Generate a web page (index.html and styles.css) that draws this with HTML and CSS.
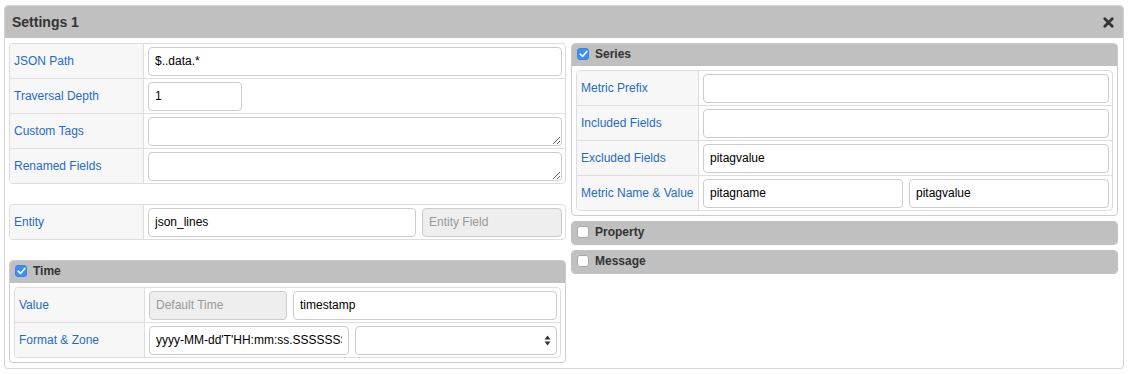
FILE: index.html
```html
<!DOCTYPE html>
<html>
<head>
<meta charset="utf-8">
<link rel="stylesheet" href="styles.css">
</head>
<body>
<div class="panel">
  <div class="panel-head">
    <span class="title">Settings 1</span>
    <svg class="close" width="11" height="11" viewBox="0 0 11 11"><path d="M1.8 1.8 L9.2 9.2 M9.2 1.8 L1.8 9.2" stroke="#333" stroke-width="2.8" stroke-linecap="round"/></svg>
  </div>
  <div class="panel-body">
    <div class="col">
      <div class="ftable wide">
        <div class="frow"><div class="flabel">JSON Path</div><div class="fcell"><input class="inp" value="$..data.*"></div></div>
        <div class="frow"><div class="flabel">Traversal Depth</div><div class="fcell"><input class="inp short" value="1"></div></div>
        <div class="frow"><div class="flabel">Custom Tags</div><div class="fcell"><textarea class="inp ta"></textarea></div></div>
        <div class="frow"><div class="flabel">Renamed Fields</div><div class="fcell"><textarea class="inp ta"></textarea></div></div>
      </div>
      <div class="ftable wide entity">
        <div class="frow"><div class="flabel">Entity</div><div class="fcell split"><input class="inp ent" value="json_lines"><input class="inp dis entf" placeholder="Entity Field" disabled></div></div>
      </div>
      <div class="sub time">
        <div class="sub-head"><span class="cb on"><svg width="9" height="8" viewBox="0 0 9 8"><path d="M1.2 4.2 L3.5 6.4 L7.8 1.4" stroke="#fff" stroke-width="1.6" fill="none" stroke-linecap="round" stroke-linejoin="round"/></svg></span>Time</div>
        <div class="sub-body">
          <div class="ftable tt">
            <div class="frow"><div class="flabel">Value</div><div class="fcell split"><input class="inp dis dt" placeholder="Default Time" disabled><input class="inp grow" value="timestamp"></div></div>
            <div class="frow"><div class="flabel">Format &amp; Zone</div><div class="fcell split"><input class="inp fmt" value="yyyy-MM-dd'T'HH:mm:ss.SSSSSSSSS"><div class="selwrap"><select class="inp sel"><option></option></select><svg class="arrows" width="7" height="11" viewBox="0 0 7 11"><path d="M3.5 0.5 L6.5 4.5 L0.5 4.5 Z M3.5 10.5 L6.5 6.5 L0.5 6.5 Z" fill="#333"/></svg></div></div></div>
          </div>
        </div>
      </div>
    </div>
    <div class="col">
      <div class="sub">
        <div class="sub-head"><span class="cb on"><svg width="9" height="8" viewBox="0 0 9 8"><path d="M1.2 4.2 L3.5 6.4 L7.8 1.4" stroke="#fff" stroke-width="1.6" fill="none" stroke-linecap="round" stroke-linejoin="round"/></svg></span>Series</div>
        <div class="sub-body">
          <div class="ftable st">
            <div class="frow"><div class="flabel">Metric Prefix</div><div class="fcell"><input class="inp"></div></div>
            <div class="frow"><div class="flabel">Included Fields</div><div class="fcell"><input class="inp"></div></div>
            <div class="frow"><div class="flabel">Excluded Fields</div><div class="fcell"><input class="inp" value="pitagvalue"></div></div>
            <div class="frow"><div class="flabel">Metric Name &amp; Value</div><div class="fcell split"><input class="inp grow" value="pitagname"><input class="inp grow" value="pitagvalue"></div></div>
          </div>
        </div>
      </div>
      <div class="sub collapsed"><div class="sub-head"><span class="cb"></span>Property</div></div>
      <div class="sub collapsed"><div class="sub-head"><span class="cb"></span>Message</div></div>
    </div>
  </div>
</div>
</body>
</html>
```

FILE: styles.css
```css
* { box-sizing: border-box; }
html, body { margin: 0; padding: 0; background: #fff; }
body { font-family: "Liberation Sans", Arial, sans-serif; font-size: 12px; color: #000; }

.panel {
  margin: 5px 4px 0 4px;
  width: 1120px;
  height: 364px;
  border: 1px solid #d4d4d4;
  border-radius: 4px;
  overflow: hidden;
}
.panel-head {
  height: 32px;
  background: #c0c0c0;
  display: flex;
  align-items: center;
  justify-content: space-between;
  padding: 0 9px 0 7px;
}
.title { font-weight: bold; font-size: 14px; color: #333; }
.close { display: block; }

.panel-body {
  display: grid;
  grid-template-columns: 557px 547px;
  column-gap: 5px;
  padding: 5px 5px 4px 4px;
  align-items: start;
}
.col { display: flex; flex-direction: column; }

.ftable {
  border: 1px solid #ddd;
  border-radius: 4px;
  display: flex;
  flex-direction: column;
}
.frow {
  display: flex;
  height: 35px;
  border-top: 1px solid #ddd;
}
.frow:first-child { border-top: none; height: 34px; }
.flabel {
  background: #f7f7f7;
  border-right: 1px solid #ddd;
  color: #1f6cc4;
  display: flex;
  align-items: center;
  padding: 0 4px;
  white-space: nowrap;
  flex: none;
}
.frow:first-child .flabel { border-top-left-radius: 4px; }
.frow:last-child .flabel { border-bottom-left-radius: 4px; }
.wide .flabel { width: 134px; }
.tt .flabel { width: 130px; }
.st .flabel { width: 122px; }
.fcell {
  flex: 1;
  display: flex;
  align-items: center;
  padding: 0 3px 0 4px;
  min-width: 0;
}
.split { gap: 6px; }

.inp {
  font-family: "Liberation Sans", Arial, sans-serif;
  font-size: 12px;
  color: #000;
  height: 29px;
  border: 1px solid #ccc;
  border-radius: 4px;
  padding: 0 6px;
  background: #fff;
  width: 100%;
  min-width: 0;
  outline: none;
}
.short { width: 94px; }
.ta { resize: vertical; padding: 5px 6px; display: block; }
.dis { background: #eee; }
.dis::placeholder { color: #999; opacity: 1; }
.ent { width: 268px; flex: none; }
.entf { flex: 1; }
.entity { margin-top: 20px; }
.dt { width: 138px; flex: none; }
.grow { flex: 1; }
.fmt { width: 200px; flex: none; }
.selwrap { position: relative; flex: 1; display: flex; }
.sel { appearance: none; -webkit-appearance: none; }
.arrows { position: absolute; right: 6px; top: 9px; }

.sub {
  border: 1px solid #ccc;
  border-radius: 4px;
  overflow: hidden;
}
.time { margin-top: 20px; }
.sub-head {
  height: 22px;
  background: #c0c0c0;
  display: flex;
  align-items: center;
  padding: 0 5px 2px 5px;
  font-weight: bold;
  font-size: 12px;
  color: #333;
  gap: 6px;
}
.sub-body { padding: 4px; }
.collapsed { margin-top: 5px; border-color: #c0c0c0; }

.cb {
  width: 12px;
  height: 12px;
  border-radius: 3px;
  background: #fff;
  border: 1px solid #a9a9a9;
  display: flex;
  align-items: center;
  justify-content: center;
  flex: none;
}
.cb.on { background: #3d8ef7; border-color: #3584ec; }
.cb svg { display: block; }
```
